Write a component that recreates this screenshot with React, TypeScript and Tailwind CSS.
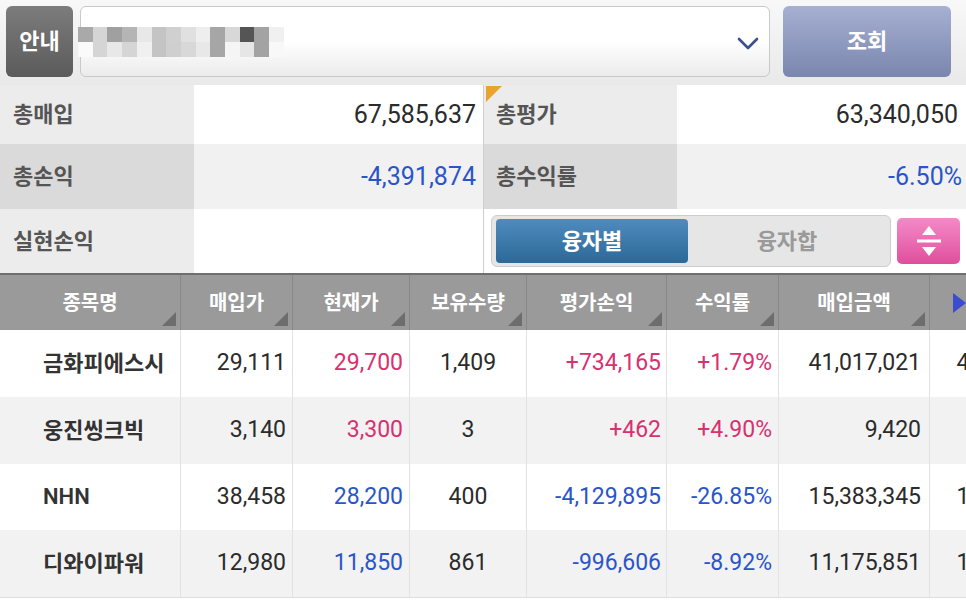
import React from "react";

const mosaicTop = ["#a9a9a9", "#d5d5d5", "#a0a0a0", "#b5b5b5", "#e8e8e8", "#c4c4c4", "#d0d0d0", "#e0e0e0", "#eeeeee", "#a6a6a6", "#d8d8d8", "#555555", "#a3a3a3", "#f0f0f0"];
const mosaicBottom = ["#fafafa", "#d5d5d5", "#e8e8e8", "#d5d5d5", "#f0f0f0", "#c4c4c4", "#cfcfcf", "#d8d8d8", "#e8e8e8", "#a6a6a6", "#f5f5f5", "#e6e6e6", "#a3a3a3", "#f8f8f8"];

type Tone = "up" | "down" | "flat";

interface Holding {
  name: string;
  buy: string;
  now: string;
  nowTone: Tone;
  qty: string;
  pnl: string;
  rate: string;
  tone: Tone;
  amount: string;
  evalAmount: string;
}

const holdings: Holding[] = [
  { name: "금화피에스시", buy: "29,111", now: "29,700", nowTone: "up", qty: "1,409", pnl: "+734,165", rate: "+1.79%", tone: "up", amount: "41,017,021", evalAmount: "41,847,300" },
  { name: "웅진씽크빅", buy: "3,140", now: "3,300", nowTone: "up", qty: "3", pnl: "+462", rate: "+4.90%", tone: "up", amount: "9,420", evalAmount: "9,900" },
  { name: "NHN", buy: "38,458", now: "28,200", nowTone: "down", qty: "400", pnl: "-4,129,895", rate: "-26.85%", tone: "down", amount: "15,383,345", evalAmount: "11,280,000" },
  { name: "디와이파워", buy: "12,980", now: "11,850", nowTone: "down", qty: "861", pnl: "-996,606", rate: "-8.92%", tone: "down", amount: "11,175,851", evalAmount: "10,202,850" },
];

const toneClass = (t: Tone) =>
  t === "up" ? "text-[#d9306f]" : t === "down" ? "text-[#2a55c9]" : "text-[#2b2b2b]";

const columns = [
  { label: "종목명", w: "w-[181px]" },
  { label: "매입가", w: "w-[112px]" },
  { label: "현재가", w: "w-[117px]" },
  { label: "보유수량", w: "w-[117px]" },
  { label: "평가손익", w: "w-[140px]" },
  { label: "수익률", w: "w-[112px]" },
  { label: "매입금액", w: "w-[151px]" },
];

function Corner() {
  return (
    <svg className="absolute right-[4px] bottom-[4px]" width="14" height="14" viewBox="0 0 14 14">
      <polygon points="14,0 14,14 0,14" fill="#6d6d6d" />
    </svg>
  );
}

export default function App() {
  return (
    <div className="w-[966px] h-[604px] overflow-hidden bg-white font-['Roboto','Noto_Sans_CJK_KR',sans-serif] text-[#2b2b2b]">
      {/* Top bar */}
      <div className="h-[85px] flex items-start gap-[7px] pt-[6px] pl-[6px] bg-gradient-to-b from-[#f8f8f8] to-[#e9e9e9]">
        <div className="w-[67px] h-[71px] rounded-[6px] bg-gradient-to-b from-[#7c7c7c] to-[#5b5b5b] flex items-center justify-center text-white text-[22px] font-bold">
          안내
        </div>
        <div className="relative w-[690px] h-[71px] rounded-[6px] border border-[#c9c9c9] bg-gradient-to-b from-white via-white to-[#ebebeb] flex items-center">
          <svg className="ml-[-3px]" width="210" height="30" viewBox="0 0 210 30" shapeRendering="crispEdges">
            {mosaicTop.map((c, i) => (
              <rect key={"t" + i} x={i * 14.7} y={0} width={14.8} height={15} fill={c} />
            ))}
            {mosaicBottom.map((c, i) => (
              <rect key={"b" + i} x={i * 14.7} y={15} width={14.8} height={15} fill={c} />
            ))}
          </svg>
          <svg className="absolute right-[10px] top-[30px]" width="22" height="14" viewBox="0 0 22 14">
            <polyline points="2,2 11,11 20,2" fill="none" stroke="#3b4f8f" strokeWidth="2.6" strokeLinecap="round" strokeLinejoin="round" />
          </svg>
        </div>
        <div className="ml-[6px] w-[168px] h-[71px] rounded-[6px] bg-gradient-to-b from-[#a6b0d2] to-[#7b86ae] flex items-center justify-center text-white text-[22px] font-bold">
          조회
        </div>
      </div>

      {/* Summary */}
      <div className="flex flex-col text-[22px]">
        <div className="flex h-[59px]">
          <div className="w-[194px] bg-[#ececec] pl-[13px] flex items-center font-bold text-[#555]">총매입</div>
          <div className="w-[289px] bg-white pr-[7px] flex items-center justify-end text-[25px] text-[#2b2b2b]">67,585,637</div>
          <div className="w-px bg-[#cfcfcf]" />
          <div className="relative w-[193px] bg-[#ececec] pl-[12px] flex items-center font-bold text-[#555]">
            <svg className="absolute left-[2px] top-[1px]" width="16" height="16" viewBox="0 0 16 16">
              <polygon points="0,0 16,0 0,16" fill="#e9a331" />
            </svg>
            총평가
          </div>
          <div className="flex-1 bg-white pr-[8px] flex items-center justify-end text-[25px] text-[#2b2b2b]">63,340,050</div>
        </div>
        <div className="flex h-[65px]">
          <div className="w-[194px] bg-[#dadada] pl-[13px] flex items-center font-bold text-[#555]">총손익</div>
          <div className="w-[289px] bg-[#f1f1f1] pr-[7px] flex items-center justify-end text-[25px] text-[#2a55c9]">-4,391,874</div>
          <div className="w-px bg-[#cfcfcf]" />
          <div className="w-[193px] bg-[#dadada] pl-[12px] flex items-center font-bold text-[#555]">총수익률</div>
          <div className="flex-1 bg-[#f1f1f1] pr-[4px] flex items-center justify-end text-[25px] text-[#2a55c9]">-6.50%</div>
        </div>
        <div className="flex h-[64px]">
          <div className="w-[194px] bg-[#ececec] pl-[13px] flex items-center font-bold text-[#555]">실현손익</div>
          <div className="w-[289px] bg-white" />
          <div className="w-px bg-[#cfcfcf]" />
          <div className="flex-1 bg-white flex items-center pl-[7px] gap-[6px]">
            <div className="w-[400px] h-[52px] rounded-[6px] border border-[#cdcdcd] bg-[#e6e6e6] flex items-center p-[4px]">
              <div className="w-[192px] h-[44px] rounded-[4px] bg-gradient-to-b from-[#4f8bbd] to-[#2c6898] flex items-center justify-center text-white font-bold">
                융자별
              </div>
              <div className="flex-1 flex items-center justify-center text-[#9a9a9a] font-bold">융자합</div>
            </div>
            <div className="w-[63px] h-[46px] rounded-[5px] bg-gradient-to-b from-[#f38ac8] to-[#df4d9c] flex items-center justify-center">
              <svg width="26" height="32" viewBox="0 0 26 32">
                <polygon points="13,1 20,10 6,10" fill="white" />
                <rect x="1" y="14.5" width="24" height="3" fill="white" />
                <polygon points="6,22 20,22 13,31" fill="white" />
              </svg>
            </div>
          </div>
        </div>
      </div>

      {/* Table header */}
      <div className="flex h-[57px] border-t-2 border-[#6f6f6f] bg-[#9a9a9a] text-white text-[20px] font-bold">
        {columns.map((c) => (
          <div key={c.label} className={`relative ${c.w} shrink-0 border-r border-[#878787] flex items-center justify-center`}>
            {c.label}
            <Corner />
          </div>
        ))}
        <div className="flex-1 flex items-center justify-end">
          <svg width="13" height="20" viewBox="0 0 13 20">
            <polygon points="0,0 13,10 0,20" fill="#3a4dcf" />
          </svg>
        </div>
      </div>

      {/* Rows */}
      <div className="flex flex-col text-[23px]">
        {holdings.map((h, i) => (
          <div key={h.name} className={`flex h-[66.75px] ${i % 2 === 1 ? "bg-[#f2f2f2]" : "bg-white"}`}>
            <div className="w-[181px] shrink-0 border-r border-[#e2e2e2] pl-[43px] flex items-center text-[22px] font-semibold text-[#333]">{h.name}</div>
            <div className="w-[112px] shrink-0 border-r border-[#e2e2e2] pr-[6px] flex items-center justify-end">{h.buy}</div>
            <div className={`w-[117px] shrink-0 border-r border-[#e2e2e2] pr-[6px] flex items-center justify-end ${toneClass(h.nowTone)}`}>{h.now}</div>
            <div className="w-[117px] shrink-0 border-r border-[#e2e2e2] flex items-center justify-center">{h.qty}</div>
            <div className={`w-[140px] shrink-0 border-r border-[#e2e2e2] pr-[5px] flex items-center justify-end ${toneClass(h.tone)}`}>{h.pnl}</div>
            <div className={`w-[112px] shrink-0 border-r border-[#e2e2e2] pr-[6px] flex items-center justify-end ${toneClass(h.tone)}`}>{h.rate}</div>
            <div className="w-[151px] shrink-0 border-r border-[#e2e2e2] pr-[8px] flex items-center justify-end">{h.amount}</div>
            <div className="w-[147px] shrink-0 pr-[8px] flex items-center justify-end">{h.evalAmount}</div>
          </div>
        ))}
      </div>
      <div className="h-[7px] border-t border-[#dedede] bg-white" />
    </div>
  );
}
